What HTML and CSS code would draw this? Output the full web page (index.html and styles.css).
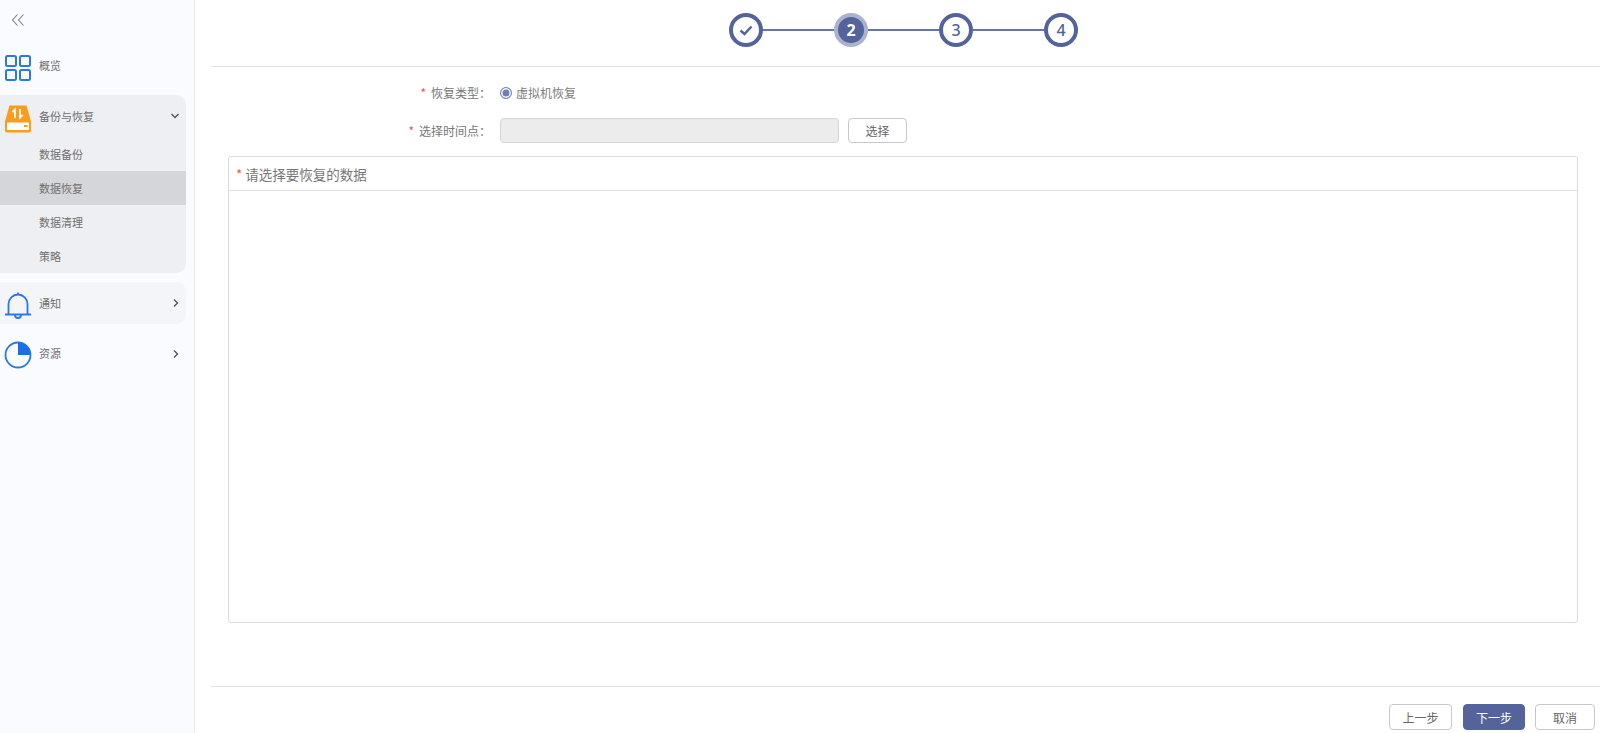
FILE: index.html
```html
<!DOCTYPE html>
<html lang="zh">
<head>
<meta charset="utf-8">
<title>数据恢复</title>
<link rel="stylesheet" href="styles.css">
</head>
<body>
<div class="app">
  <aside class="sidebar">
    <div class="collapse">
      <svg width="14" height="14" viewBox="0 0 14 14" fill="none" stroke="#7a8190" stroke-width="1.1"><path d="M6.5 1.5 1.5 7l5 5.5M12.5 1.5 7.500 7l5 5.500"/></svg>
    </div>
    <div class="nav-item overview">
      <svg class="nav-icon" width="28" height="28" viewBox="0 0 28 28" fill="none" stroke="#2a78e8" stroke-width="2"><rect x="2" y="2" width="10" height="10" rx="1.500"/><rect x="16" y="2" width="10" height="10" rx="1.500"/><rect x="2" y="16" width="10" height="10" rx="1.500"/><rect x="16" y="16" width="10" height="10" rx="1.500"/></svg>
      <span>概览</span>
    </div>
    <div class="group">
      <div class="nav-item group-head">
        <svg class="nav-icon" width="28" height="28" viewBox="0 0 28 28"><path d="M5.500 0.500h17l4.500 16v9a2 2 0 0 1-2 2H3a2 2 0 0 1-2-2v-9z" fill="#fb9d1c"/><rect x="3" y="17.500" width="22" height="7.500" rx="1" fill="#fff"/><rect x="20" y="20" width="3.500" height="2" fill="#fb9d1c"/><path d="M11 13V4.500L8.500 7M16 4v8.500l2.500-2.500" fill="none" stroke="#fff" stroke-width="1.800"/></svg>
        <span class="grow">备份与恢复</span>
        <svg class="chev" width="10" height="10" viewBox="0 0 10 10" fill="none" stroke="#555" stroke-width="1.400"><path d="M1.500 3 5 6.500 8.500 3"/></svg>
      </div>
      <div class="sub">数据备份</div>
      <div class="sub active">数据恢复</div>
      <div class="sub">数据清理</div>
      <div class="sub">策略</div>
    </div>
    <div class="nav-item notice">
      <svg class="nav-icon" width="28" height="28" viewBox="0 0 28 28" fill="none" stroke="#2a78e8" stroke-width="1.800"><path d="M4.500 23V13a9.500 9.500 0 0 1 19 0v10M14 3.500V1.500"/><path d="M1 23.500h26" stroke-width="2"/><path d="M11 24a3 3 0 0 0 6 0"/></svg>
      <span class="grow">通知</span>
      <svg class="chev" width="10" height="10" viewBox="0 0 10 10" fill="none" stroke="#555" stroke-width="1.400"><path d="M3 1.500 6.500 5 3 8.500"/></svg>
    </div>
    <div class="nav-item resource">
      <svg class="nav-icon" width="28" height="28" viewBox="0 0 28 28" fill="none"><circle cx="14" cy="14" r="12.500" stroke="#2a78e8" stroke-width="1.800"/><path d="M14 1.500A12.500 12.500 0 0 1 26.500 14H14z" fill="#1a6fe6"/></svg>
      <span class="grow">资源</span>
      <svg class="chev" width="10" height="10" viewBox="0 0 10 10" fill="none" stroke="#555" stroke-width="1.400"><path d="M3 1.500 6.500 5 3 8.500"/></svg>
    </div>
  </aside>
  <main class="main">
    <div class="stepper">
      <div class="step done"><svg width="14" height="12" viewBox="0 0 14 12" fill="none" stroke="#54639c" stroke-width="2.400"><path d="M1.500 6.500 5.500 10 12.500 2.500"/></svg></div>
      <div class="line"></div>
      <div class="step current">2</div>
      <div class="line"></div>
      <div class="step">3</div>
      <div class="line"></div>
      <div class="step">4</div>
    </div>
    <div class="content">
      <div class="row row-type">
        <label class="label"><i>*</i>恢复类型：</label>
        <span class="radio"></span>
        <span class="radio-text">虚拟机恢复</span>
      </div>
      <div class="row row-time">
        <label class="label"><i>*</i>选择时间点：</label>
        <div class="input"></div>
        <button class="btn pick">选择</button>
      </div>
      <section class="panel">
        <div class="panel-head"><i>*</i>请选择要恢复的数据</div>
      </section>
    </div>
    <div class="footer">
      <button class="btn prev">上一步</button>
      <button class="btn next">下一步</button>
      <button class="btn cancel">取消</button>
    </div>
  </main>
</div>
</body>
</html>
```
FILE: styles.css
```css
* { box-sizing: border-box; }
html, body { margin: 0; height: 100%; }
body {
  font-family: "Noto Sans CJK SC", "Noto Sans", sans-serif;
  font-size: 12px;
  color: #666;
  background: #fff;
  overflow: hidden;
}
.app { display: flex; height: 733px; }
.sidebar {
  width: 195px;
  flex: none;
  background: #fafbfe;
  border-right: 1px solid #e9eaee;
  padding-right: 8px;
  font-size: 11px;
  color: #6f6f6f;
}
.collapse { height: 40px; padding: 13px 0 0 11px; }
.collapse svg { display: block; }
.nav-item { display: flex; align-items: center; padding: 0 6px 0 4px; }
.nav-icon { flex: none; margin-right: 7px; }
.grow { flex: 1; }
.chev { margin-right: -1px; }
.overview { height: 55px; }
.overview .nav-icon { margin-top: 1px; }
.overview span { margin-bottom: 5px; }
.group {
  background: #eeeff2;
  border-radius: 0 10px 10px 0;
  height: 178px;
}
.group-head { height: 43px; padding-top: 2px; }
.group-head .nav-icon { margin-top: 2px; }
.group-head span { margin-bottom: 3px; }
.group-head .chev { margin: 0 0 3px; }
.sub { height: 34px; line-height: 34px; padding-left: 39px; }
.group-head + .sub { height: 33px; line-height: 32px; }
.sub.active { background: #d5d6d9; }
.notice {
  margin-top: 9px;
  height: 42px;
  background: #f4f5f8;
  border-radius: 0 10px 10px 0;
}
.notice .nav-icon { margin-top: 4px; }
.notice span { margin-bottom: 1px; }
.resource { margin-top: 9px; height: 42px; padding-top: 2px; }
.resource span { margin-bottom: 5px; }
.resource .chev { margin-bottom: 3px; }
.main {
  flex: 1;
  min-width: 0;
  padding-left: 16px;
  display: flex;
  flex-direction: column;
}
.stepper {
  height: 67px;
  border-bottom: 1px solid #dfdfe2;
  display: flex;
  justify-content: center;
  padding: 13px 4px 0 0;
}
.step {
  width: 34px;
  height: 34px;
  flex: none;
  border: 4px solid #54639c;
  border-radius: 50%;
  background: #fff;
  color: #54639c;
  font-size: 16px;
  font-weight: 500;
  display: flex;
  align-items: center;
  justify-content: center;
  font-family: "Noto Sans", sans-serif;
}
.step.current {
  background: #54639c;
  color: #fff;
  font-weight: 700;
  border-color: #aab2cf;
}
.line { width: 71px; height: 2px; margin-top: 16px; background: #6775a8; flex: none; }
.content { height: 620px; border-bottom: 1px solid #dfdfe2; padding: 0 22px 0 17px; }
.row { display: flex; align-items: center; }
.row-type { height: 50px; padding-top: 1px; }
.row-time { height: 25px; margin-top: 1px; }
.label { width: 263px; margin-right: 9px; flex: none; text-align: right; color: #777; }
.label i, .panel-head i {
  font-style: normal;
  color: #ef5350;
  margin-right: 5px;
}
.radio {
  width: 12px;
  height: 12px;
  border: 1px solid #7b88b6;
  border-radius: 50%;
  background: #6d7dba;
  box-shadow: inset 0 0 0 1.500px #fff;
  flex: none;
}
.radio-text { margin-left: 4px; color: #7d7d7d; }
.input {
  width: 339px;
  height: 25px;
  background: #ececec;
  border: 1px solid #d6d6d6;
  border-radius: 4px;
}
.btn {
  font-family: inherit;
  font-size: 12px;
  color: #666;
  background: #fff;
  border: 1px solid #c8c8c8;
  border-radius: 4px;
  padding: 0;
  height: 25px;
}
.pick { width: 59px; margin-left: 9px; }
.panel {
  height: 467px;
  margin-top: 13px;
  border: 1px solid #dcdcdf;
  border-radius: 3px;
}
.panel-head {
  height: 34px;
  line-height: 35px;
  padding-left: 7px;
  font-size: 13.500px;
  color: #777;
  border-bottom: 1px solid #dfdfe2;
}
.panel-head i { margin-right: 3px; }
.footer {
  display: flex;
  justify-content: flex-end;
  padding: 17px 5px 0 0;
}
.footer .btn { height: 26px; }
.prev { width: 63px; }
.next { width: 62px; margin-left: 11px; background: #54639c; border-color: #54639c; color: #fff; }
.cancel { width: 60px; margin-left: 10px; }
```
